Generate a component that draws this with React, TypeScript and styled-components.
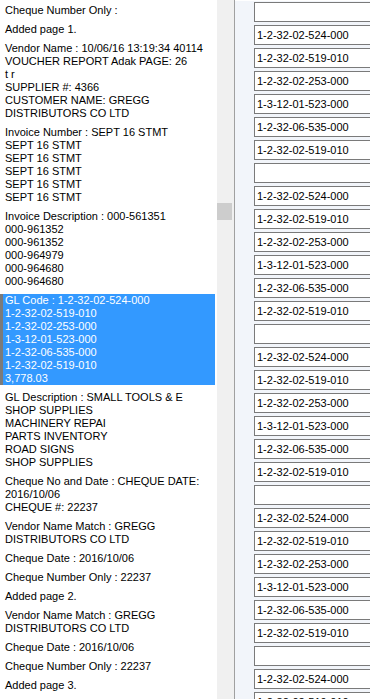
import React from 'react'
import styled, { createGlobalStyle } from 'styled-components'

const GlobalStyle = createGlobalStyle`
  html, body {
    margin: 0;
    padding: 0;
    background: #fff;
  }
  body {
    font-family: "Liberation Sans", Arial, sans-serif;
    font-size: 11px;
    color: #000;
  }
`

const Window = styled.div`
  display: flex;
  width: 370px;
  height: 699px;
  overflow: hidden;
`

const ListPane = styled.div`
  width: 217px;
  flex-shrink: 0;
  background: #fff;
  display: flex;
  flex-direction: column;
  gap: 6px;
  padding-top: 4px;
  box-sizing: border-box;
`

const ListItem = styled.div<{ $selected?: boolean }>`
  margin-right: 2px;
  padding: 0 0 0 5px;
  line-height: 13px;
  white-space: nowrap;
  color: ${p => (p.$selected ? '#fff' : '#000')};
  background: ${p => (p.$selected ? '#3399ff' : 'transparent')};
  box-shadow: ${p => (p.$selected ? 'inset 3px 0 0 #7b7b7b' : 'none')};
`

const ScrollTrack = styled.div`
  width: 17px;
  flex-shrink: 0;
  background: #f0f0f0;
  display: flex;
  flex-direction: column;
  padding-top: 203px;
  box-sizing: border-box;
`

const ScrollThumb = styled.div`
  width: 15px;
  height: 17px;
  background: #cdcdcd;
`

const Divider = styled.div`
  width: 1px;
  flex-shrink: 0;
  background: #a0a0a0;
`

const FieldPanel = styled.div`
  flex: 1;
  background: #f2f5fa;
  border-top: 1px solid #fff;
  display: flex;
  flex-direction: column;
  gap: 3px;
  padding: 1px 0 0 19px;
  box-sizing: border-box;
`

const FieldBox = styled.div`
  width: 160px;
  height: 20px;
  flex-shrink: 0;
  box-sizing: border-box;
  border: 1px solid #7a7a7a;
  border-right: none;
  background: #fff;
  padding-left: 2px;
  line-height: 18px;
  color: #000;
  white-space: nowrap;
`

const items: { lines: string[]; selected?: boolean }[] = [
  { lines: ['Cheque Number Only :'] },
  { lines: ['Added page 1.'] },
  {
    lines: [
      'Vendor Name : 10/06/16 13:19:34 40114',
      'VOUCHER REPORT Adak PAGE: 26',
      't r',
      'SUPPLIER #: 4366',
      'CUSTOMER NAME: GREGG',
      'DISTRIBUTORS CO LTD',
    ],
  },
  {
    lines: [
      'Invoice Number : SEPT 16 STMT',
      'SEPT 16 STMT',
      'SEPT 16 STMT',
      'SEPT 16 STMT',
      'SEPT 16 STMT',
      'SEPT 16 STMT',
    ],
  },
  {
    lines: [
      'Invoice Description : 000-561351',
      '000-961352',
      '000-961352',
      '000-964979',
      '000-964680',
      '000-964680',
    ],
  },
  {
    selected: true,
    lines: [
      'GL Code : 1-2-32-02-524-000',
      '1-2-32-02-519-010',
      '1-2-32-02-253-000',
      '1-3-12-01-523-000',
      '1-2-32-06-535-000',
      '1-2-32-02-519-010',
      '3,778.03',
    ],
  },
  {
    lines: [
      'GL Description : SMALL TOOLS & E',
      'SHOP SUPPLIES',
      'MACHINERY REPAI',
      'PARTS INVENTORY',
      'ROAD SIGNS',
      'SHOP SUPPLIES',
    ],
  },
  { lines: ['Cheque No and Date : CHEQUE DATE:', '2016/10/06', 'CHEQUE #: 22237'] },
  { lines: ['Vendor Name Match : GREGG', 'DISTRIBUTORS CO LTD'] },
  { lines: ['Cheque Date : 2016/10/06'] },
  { lines: ['Cheque Number Only : 22237'] },
  { lines: ['Added page 2.'] },
  { lines: ['Vendor Name Match : GREGG', 'DISTRIBUTORS CO LTD'] },
  { lines: ['Cheque Date : 2016/10/06'] },
  { lines: ['Cheque Number Only : 22237'] },
  { lines: ['Added page 3.'] },
]

const codes = [
  '1-2-32-02-524-000',
  '1-2-32-02-519-010',
  '1-2-32-02-253-000',
  '1-3-12-01-523-000',
  '1-2-32-06-535-000',
  '1-2-32-02-519-010',
]

// blank box, then the six codes, repeated down the panel
const fields: string[] = []
for (let i = 0; i < 31; i++) {
  const k = i % 7
  fields.push(k === 0 ? '' : codes[k - 1])
}

export default function App() {
  return (
    <>
      <GlobalStyle />
      <Window>
        <ListPane>
          {items.map((item, i) => (
            <ListItem key={i} $selected={item.selected}>
              {item.lines.map((line, j) => (
                <div key={j}>{line}</div>
              ))}
            </ListItem>
          ))}
        </ListPane>
        <ScrollTrack>
          <ScrollThumb />
        </ScrollTrack>
        <Divider />
        <FieldPanel>
          {fields.map((f, i) => (
            <FieldBox key={i}>{f}</FieldBox>
          ))}
        </FieldPanel>
      </Window>
    </>
  )
}
